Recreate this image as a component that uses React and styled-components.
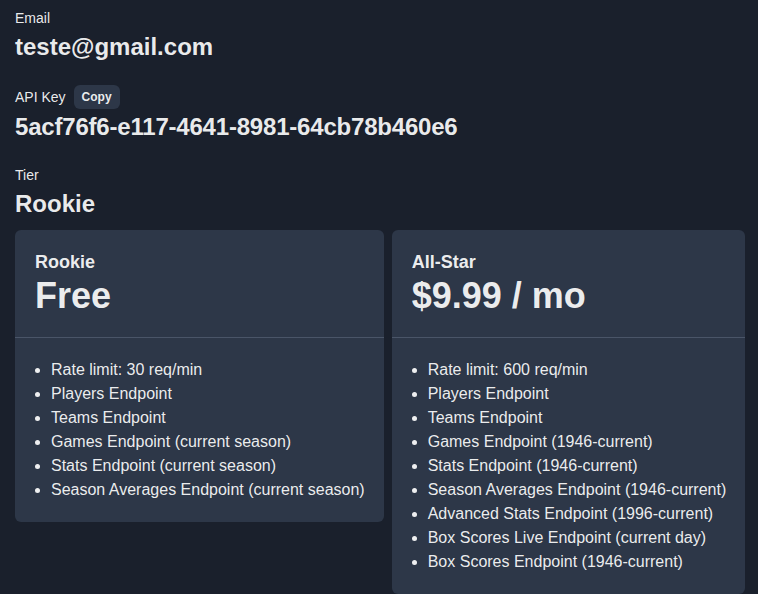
import React from "react";
import styled, { createGlobalStyle } from "styled-components";

const GlobalStyle = createGlobalStyle`
  body {
    margin: 0;
    background: #1a202c;
    color: rgba(255, 255, 255, 0.92);
    font-family: "Liberation Sans", Arial, sans-serif;
  }
`;

const Page = styled.div`
  padding: 8px 15px 20px;
  display: flex;
  flex-direction: column;
`;

const Field = styled.div`
  display: flex;
  flex-direction: column;
  margin-bottom: ${(p) => p.$gap || 22}px;
`;

const LabelRow = styled.div`
  display: flex;
  align-items: center;
  gap: 8px;
  height: ${(p) => (p.$tall ? 24 : 20)}px;
  margin-bottom: ${(p) => (p.$tall ? 2 : 3)}px;
`;

const Label = styled.span`
  font-size: 14px;
  line-height: 20px;
`;

const Value = styled.div`
  font-size: 24px;
  font-weight: 700;
  line-height: 32px;
  letter-spacing: ${(p) => p.$tight ? "-0.2px" : "normal"};
`;

const CopyButton = styled.button`
  height: 24px;
  padding: 0 8px;
  border: none;
  border-radius: 6px;
  background: #2d3748;
  color: rgba(255, 255, 255, 0.92);
  font-family: inherit;
  font-size: 12px;
  font-weight: 700;
  cursor: pointer;
`;

const Plans = styled.div`
  display: flex;
  align-items: flex-start;
  gap: 8px;
`;

const Card = styled.div`
  background: #2d3748;
  border-radius: 6px;
  flex: 0 0 auto;
`;

const CardHead = styled.div`
  padding: 20px 20px 19px;
  border-bottom: 1px solid #4a5568;
`;

const PlanName = styled.div`
  font-size: 18px;
  font-weight: 700;
  line-height: 24px;
`;

const Price = styled.div`
  font-size: 36px;
  font-weight: 700;
  line-height: 44px;
`;

const Features = styled.ul`
  margin: 0;
  padding: 20px 19px 20px 36px;
`;

const Feature = styled.li`
  font-size: 16px;
  line-height: 24px;
`;

const plans = [
  {
    name: "Rookie",
    price: "Free",
    features: [
      "Rate limit: 30 req/min",
      "Players Endpoint",
      "Teams Endpoint",
      "Games Endpoint (current season)",
      "Stats Endpoint (current season)",
      "Season Averages Endpoint (current season)",
    ],
  },
  {
    name: "All-Star",
    price: "$9.99 / mo",
    features: [
      "Rate limit: 600 req/min",
      "Players Endpoint",
      "Teams Endpoint",
      "Games Endpoint (1946-current)",
      "Stats Endpoint (1946-current)",
      "Season Averages Endpoint (1946-current)",
      "Advanced Stats Endpoint (1996-current)",
      "Box Scores Live Endpoint (current day)",
      "Box Scores Endpoint (1946-current)",
    ],
  },
];

const App = () => {
  return (
    <Page>
      <GlobalStyle />
      <Field>
        <LabelRow>
          <Label>Email</Label>
        </LabelRow>
        <Value>teste@gmail.com</Value>
      </Field>
      <Field>
        <LabelRow $tall>
          <Label>API Key</Label>
          <CopyButton>Copy</CopyButton>
        </LabelRow>
        <Value $tight>5acf76f6-e117-4641-8981-64cb78b460e6</Value>
      </Field>
      <Field $gap={10}>
        <LabelRow>
          <Label>Tier</Label>
        </LabelRow>
        <Value>Rookie</Value>
      </Field>
      <Plans>
        {plans.map((plan) => (
          <Card key={plan.name}>
            <CardHead>
              <PlanName>{plan.name}</PlanName>
              <Price>{plan.price}</Price>
            </CardHead>
            <Features>
              {plan.features.map((f) => (
                <Feature key={f}>{f}</Feature>
              ))}
            </Features>
          </Card>
        ))}
      </Plans>
    </Page>
  );
};

export default App;
